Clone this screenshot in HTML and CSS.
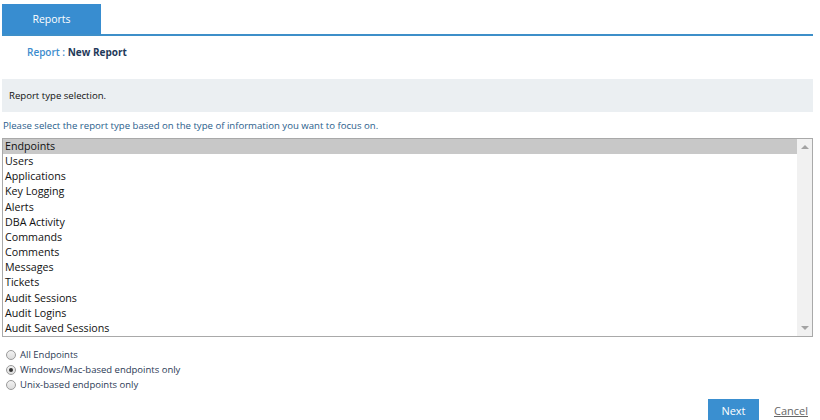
FILE: index.html
```html
<!DOCTYPE html>
<html>
<head>
<meta charset="utf-8">
<link rel="stylesheet" href="styles.css">
</head>
<body>
<div class="page">
  <div class="tabs">
    <div class="tab">Reports</div>
  </div>
  <div class="crumb"><span class="crumb-a">Report : </span><span class="crumb-b">New Report</span></div>
  <div class="panel">Report type selection.</div>
  <div class="hint">Please select the report type based on the type of information you want to focus on.</div>
  <div class="listbox">
    <div class="items">
      <div class="item selected">Endpoints</div>
      <div class="item">Users</div>
      <div class="item">Applications</div>
      <div class="item">Key Logging</div>
      <div class="item">Alerts</div>
      <div class="item">DBA Activity</div>
      <div class="item">Commands</div>
      <div class="item">Comments</div>
      <div class="item">Messages</div>
      <div class="item">Tickets</div>
      <div class="item">Audit Sessions</div>
      <div class="item">Audit Logins</div>
      <div class="item">Audit Saved Sessions</div>
    </div>
    <div class="scrollbar">
      <div class="arrow up"></div>
      <div class="arrow down"></div>
    </div>
  </div>
  <div class="radios">
    <label class="radio"><span class="dot"></span>All Endpoints</label>
    <label class="radio"><span class="dot checked"></span>Windows/Mac-based endpoints only</label>
    <label class="radio"><span class="dot"></span>Unix-based endpoints only</label>
  </div>
  <div class="actions">
    <button class="btn-next">Next</button>
    <a class="cancel">Cancel</a>
  </div>
</div>
</body>
</html>
```
FILE: styles.css
```css
html, body {
  margin: 0;
  padding: 0;
  background: #fff;
}
body {
  font-family: "Open Sans", "DejaVu Sans", sans-serif;
  font-size: 11px;
  color: #222;
}
.page {
  width: 811px;
  padding-left: 2px;
}
.tabs {
  margin-top: 4px;
  display: flex;
  border-bottom: 2px solid #3d8fc9;
}
.tab {
  width: 99px;
  height: 30px;
  background: #388dd0;
  color: #fff;
  display: flex;
  align-items: center;
  justify-content: center;
  font-size: 10.5px;
}
.crumb {
  margin-top: 9px;
  padding-left: 25px;
  font-size: 10px;
  line-height: 15px;
}
.crumb-a { color: #3c8ccd; font-weight: 600; }
.crumb-b { color: #1f3a5a; font-weight: bold; }
.panel {
  margin-top: 19px;
  height: 33px;
  background: #ebeff2;
  display: flex;
  align-items: center;
  padding-left: 7px;
  font-size: 9.6px;
  color: #111;
}
.hint {
  margin-top: 6px;
  padding-left: 1px;
  font-size: 9.6px;
  line-height: 15px;
  color: #2a5e8c;
}
.listbox {
  margin-top: 5px;
  height: 197px;
  border: 1px solid #a9a9a9;
  display: flex;
}
.items {
  flex: 1;
}
.item {
  height: 15.17px;
  line-height: 15px;
  padding-left: 2px;
  font-size: 10.7px;
  color: #111;
}
.item.selected {
  background: #c8c8c8;
}
.scrollbar {
  width: 15px;
  background: #f1f1f1;
  display: flex;
  flex-direction: column;
  justify-content: space-between;
  align-items: center;
  padding: 6px 0;
}
.arrow {
  width: 0;
  height: 0;
  border-left: 4px solid transparent;
  border-right: 4px solid transparent;
}
.arrow.up { border-bottom: 4px solid #a3a3a3; }
.arrow.down { border-top: 4px solid #a3a3a3; }
.radios {
  margin-top: 10px;
  padding-left: 4px;
  display: flex;
  flex-direction: column;
}
.radio {
  display: flex;
  align-items: center;
  height: 15px;
  font-size: 9.5px;
  color: #2b3a55;
}
.dot {
  width: 8px;
  height: 8px;
  border: 1px solid #9a9a9a;
  border-radius: 50%;
  background: linear-gradient(#f2f2f2, #dcdcdc);
  margin-right: 4px;
  position: relative;
  box-sizing: content-box;
}
.dot.checked::after {
  content: "";
  position: absolute;
  left: 2px;
  top: 2px;
  width: 4px;
  height: 4px;
  border-radius: 50%;
  background: #333;
}
.actions {
  margin-top: 7px;
  display: flex;
  justify-content: flex-end;
  align-items: center;
  padding-right: 5px;
}
.btn-next {
  width: 51px;
  height: 22px;
  border: none;
  background: #3a8fd0;
  color: #fff;
  font-family: "Open Sans", "DejaVu Sans", sans-serif;
  font-size: 11px;
  padding: 0;
}
.cancel {
  margin-left: 15px;
  font-size: 11px;
  color: #666;
  text-decoration: underline;
}
```
